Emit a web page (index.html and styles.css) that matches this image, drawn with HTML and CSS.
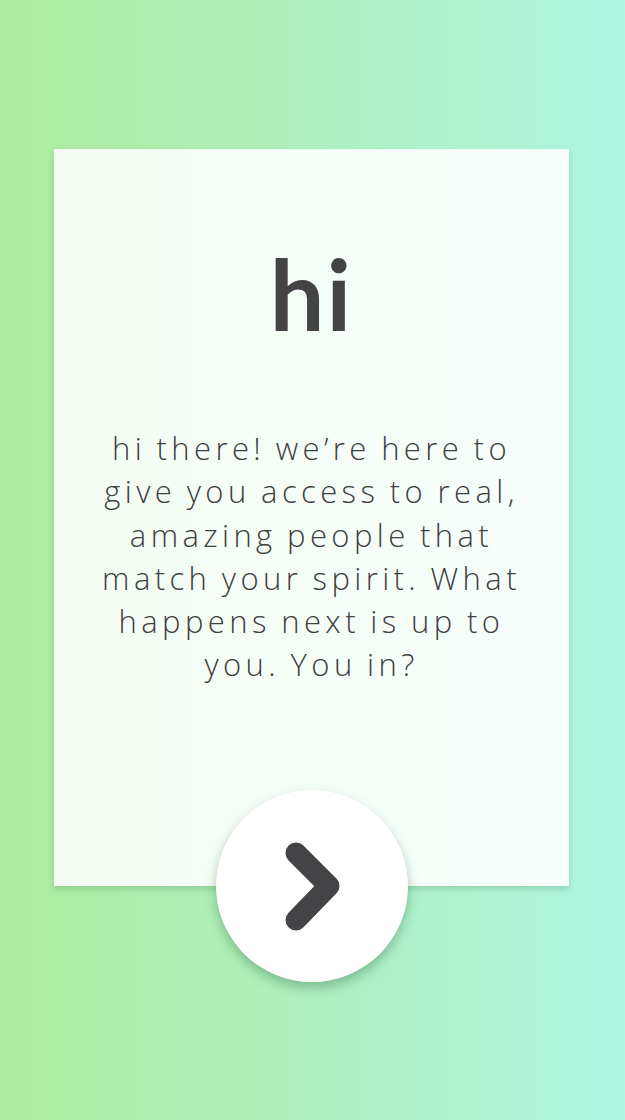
FILE: index.html
```html
<!DOCTYPE html>
<html lang="en">
<head>
<meta charset="utf-8">
<title>hi</title>
<link rel="stylesheet" href="styles.css">
</head>
<body>
<main class="screen">
  <section class="card">
    <h1 class="title">hi</h1>
    <p class="intro">hi there! we’re here to give you access to real, amazing people that match your spirit. What happens next is up to you. You in?</p>
    <button class="next" type="button" aria-label="Next">
      <svg class="chevron" viewBox="0 0 192 192" width="192" height="192" aria-hidden="true">
        <path d="M80 63 L113 96 L80 130" fill="none" stroke="#444346" stroke-width="21" stroke-linecap="round" stroke-linejoin="round"/>
      </svg>
    </button>
  </section>
</main>
</body>
</html>
```
FILE: styles.css
```css
html, body {
  margin: 0;
  padding: 0;
}
body {
  width: 625px;
  min-height: 1120px;
  background: linear-gradient(to right, #aeec9e 0%, #aef5e2 100%);
  font-family: "Lato", "Open Sans", sans-serif;
  color: #444346;
}
.screen {
  display: flex;
  justify-content: center;
  padding: 149px 2px 0 0;
}
.card {
  position: relative;
  box-sizing: border-box;
  width: 515px;
  height: 737px;
  padding: 95px 40px 0;
  background: linear-gradient(to right, rgba(255,255,255,0.86), rgba(255,255,255,0.9));
  box-shadow: 0 3px 6px rgba(60, 120, 80, 0.25);
  text-align: center;
}
.title {
  margin: 0;
  font-size: 97px;
  line-height: 100px;
  font-weight: 700;
  letter-spacing: 2px;
}
.intro {
  margin: 83px 0 0;
  font-family: "Open Sans", "Lato", sans-serif;
  font-size: 31px;
  line-height: 43.3px;
  font-weight: 300;
  letter-spacing: 4.4px;
  word-spacing: -2px;
  color: #3f3e41;
}
.next {
  position: absolute;
  left: 50%;
  bottom: -96px;
  width: 192px;
  height: 192px;
  margin-left: -96px;
  padding: 0;
  border: none;
  border-radius: 50%;
  background: #ffffff;
  box-shadow: 0 6px 12px rgba(40, 90, 60, 0.35);
  cursor: pointer;
}
.chevron {
  display: block;
}
```
